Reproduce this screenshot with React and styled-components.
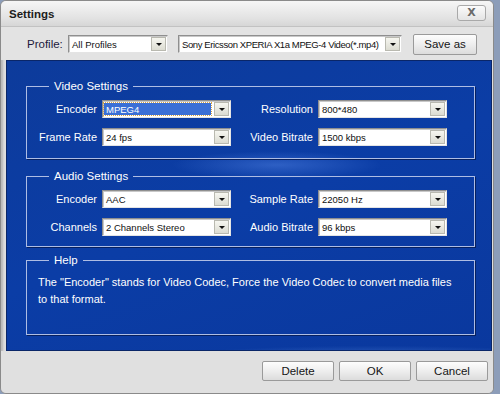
import styled, { createGlobalStyle } from "styled-components";

const GlobalStyle = createGlobalStyle`
  html, body {
    margin: 0;
    padding: 0;
    background: #8c9db9;
    overflow: hidden;
  }
  * { box-sizing: border-box; }
`;

const Window = styled.div`
  width: 494px;
  height: 394px;
  background: #dedede;
  border: 1px solid #8a8a8a;
  border-radius: 6px;
  box-shadow: inset 3px 0 2px -1px #b8b8b8;
  display: flex;
  flex-direction: column;
  font-family: "Liberation Sans", Arial, sans-serif;
  overflow: hidden;
`;

const TitleBar = styled.div`
  height: 26px;
  flex-shrink: 0;
  display: flex;
  align-items: center;
  justify-content: space-between;
  padding: 0 7px 0 8px;
  background: linear-gradient(#f6f6f6, #e2e2e2 70%, #d6d6d6);
  border-bottom: 1px solid #c2c2c2;
`;

const Title = styled.div`
  font-weight: bold;
  font-size: 11.5px;
  color: #1c1c1c;
`;

const CloseButton = styled.div`
  width: 29px;
  height: 16px;
  border: 1px solid #a9a9a9;
  border-radius: 3px;
  background: linear-gradient(#fbfbfb, #e4e4e4);
  display: flex;
  align-items: center;
  justify-content: center;
  color: #6a6a6a;
  font-size: 11px;
  font-weight: bold;
  font-family: "DejaVu Sans", sans-serif;
  margin-top: -2px;
`;

const ProfileRow = styled.div`
  height: 33px;
  flex-shrink: 0;
  display: flex;
  align-items: center;
  padding: 1px 0 0 26px;
  background: #e3e3e3;
`;

const ProfileLabel = styled.span`
  width: 41px;
  font-size: 11.5px;
  color: #1d1a3c;
`;

const Select = styled.div`
  width: ${(p) => p.$w}px;
  height: 18px;
  flex-shrink: 0;
  display: flex;
  align-items: stretch;
  background: #fff;
  border: 1px solid #8f8f8f;
  border-right-color: #e4e4e4;
  border-bottom-color: #e4e4e4;
  box-shadow: inset 1px 1px 0 #c8c8c8;
  margin-right: ${(p) => p.$mr || 0}px;
`;

const SelectText = styled.div`
  flex: 1;
  display: flex;
  align-items: center;
  padding-left: 2px;
  margin: 2px 2px 2px 1px;
  font-size: 9.5px;
  letter-spacing: ${(p) => p.$ls || 0}px;
  white-space: nowrap;
  overflow: hidden;
  background: ${(p) => (p.$active ? "#3a6fd6" : "transparent")};
  color: ${(p) => (p.$active ? "#fff" : "#101010")};
  outline: ${(p) => (p.$active ? "1px dotted #d9a441" : "none")};
`;

const Arrow = styled.div`
  width: 15px;
  margin: 1px;
  background: linear-gradient(#f6f6f0, #dcdcd2);
  border: 1px solid #b9b9b0;
  display: flex;
  align-items: center;
  justify-content: center;
  &::after {
    content: "";
    border-left: 3px solid transparent;
    border-right: 3px solid transparent;
    border-top: 3px solid #111;
  }
`;

const Button = styled.div`
  width: ${(p) => p.$w || 72}px;
  height: ${(p) => p.$h || 20}px;
  flex-shrink: 0;
  border: 1px solid #9a9a9a;
  border-radius: 2px;
  background: linear-gradient(#fdfdfd, #eeeeee 50%, #dcdcdc);
  display: flex;
  align-items: center;
  justify-content: center;
  font-size: 11.5px;
  color: #151515;
`;

const Panel = styled.div`
  flex: 1;
  margin: 0 1px 0 5px;
  padding: 18px 16px 15px 19px;
  border: 1px solid #0a2668;
  background:
    radial-gradient(ellipse 330px 22px at 370px 300px, rgba(130, 180, 255, 0.45), transparent 70%),
    radial-gradient(ellipse 250px 10px at 330px 326px, rgba(160, 205, 255, 0.35), transparent 70%),
    radial-gradient(ellipse 150px 20px at 270px 104px, rgba(110, 160, 255, 0.35), transparent 70%),
    linear-gradient(160deg, #0d3b9b 0%, #0b3da6 50%, #0a389e 100%);
  display: flex;
  flex-direction: column;
`;

const Group = styled.fieldset`
  margin: ${(p) => p.$mt || 0}px 0 0 0;
  padding: ${(p) => p.$pad || "7px 0 12px 0"};
  border: 1px solid #aebde4;
  box-shadow: 1px 1px 0 #06205f;
  min-width: 0;
  flex: ${(p) => (p.$grow ? 1 : "none")};
`;

const Legend = styled.legend`
  margin-left: 22px;
  padding: 0 5px;
  font-size: 11.5px;
  color: #ffffff;
  line-height: 14px;
`;

const Grid = styled.div`
  display: grid;
  grid-template-columns: 70px 129px 77px 129px;
  column-gap: 5px;
  row-gap: 10px;
  align-items: center;
`;

const Label = styled.div`
  text-align: right;
  font-size: 11px;
  color: #ffffff;
  white-space: nowrap;
`;

const HelpText = styled.div`
  font-size: 11px;
  line-height: 17px;
  color: #ffffff;
  padding: 7px 20px 0 11px;
`;

const Footer = styled.div`
  height: 42px;
  flex-shrink: 0;
  display: flex;
  justify-content: flex-end;
  align-items: center;
  gap: 5px;
  padding: 0 5px 2px 0;
  background: #e0e0e0;
`;

function Dropdown({ value, w = 129, active, mr, ls }) {
  return (
    <Select $w={w} $mr={mr}>
      <SelectText $active={active} $ls={ls}>{value}</SelectText>
      <Arrow />
    </Select>
  );
}

function SettingRow({ left, right }) {
  return (
    <>
      <Label>{left.label}</Label>
      <Dropdown value={left.value} active={left.active} />
      <Label>{right.label}</Label>
      <Dropdown value={right.value} />
    </>
  );
}

export default function App() {
  return (
    <>
      <GlobalStyle />
      <Window>
        <TitleBar>
          <Title>Settings</Title>
          <CloseButton>X</CloseButton>
        </TitleBar>

        <ProfileRow>
          <ProfileLabel>Profile:</ProfileLabel>
          <Dropdown value="All Profiles" w={100} mr={10} />
          <Dropdown value="Sony Ericsson XPERIA X1a MPEG-4 Video(*.mp4)" w={224} mr={11} ls={-0.4} />
          <Button $w={64} $h={21}>Save as</Button>
        </ProfileRow>

        <Panel>
          <Group>
            <Legend>Video Settings</Legend>
            <Grid>
              <SettingRow
                left={{ label: "Encoder", value: "MPEG4", active: true }}
                right={{ label: "Resolution", value: "800*480" }}
              />
              <SettingRow
                left={{ label: "Frame Rate", value: "24 fps" }}
                right={{ label: "Video Bitrate", value: "1500 kbps" }}
              />
            </Grid>
          </Group>

          <Group $mt={10} $pad="7px 0 10px 0">
            <Legend>Audio Settings</Legend>
            <Grid>
              <SettingRow
                left={{ label: "Encoder", value: "AAC" }}
                right={{ label: "Sample Rate", value: "22050 Hz" }}
              />
              <SettingRow
                left={{ label: "Channels", value: "2 Channels Stereo" }}
                right={{ label: "Audio Bitrate", value: "96 kbps" }}
              />
            </Grid>
          </Group>

          <Group $grow $mt={6} $pad="0">
            <Legend>Help</Legend>
            <HelpText>
              The "Encoder" stands for Video Codec, Force the Video Codec to convert media files to that format.
            </HelpText>
          </Group>
        </Panel>

        <Footer>
          <Button>Delete</Button>
          <Button>OK</Button>
          <Button>Cancel</Button>
        </Footer>
      </Window>
    </>
  );
}
